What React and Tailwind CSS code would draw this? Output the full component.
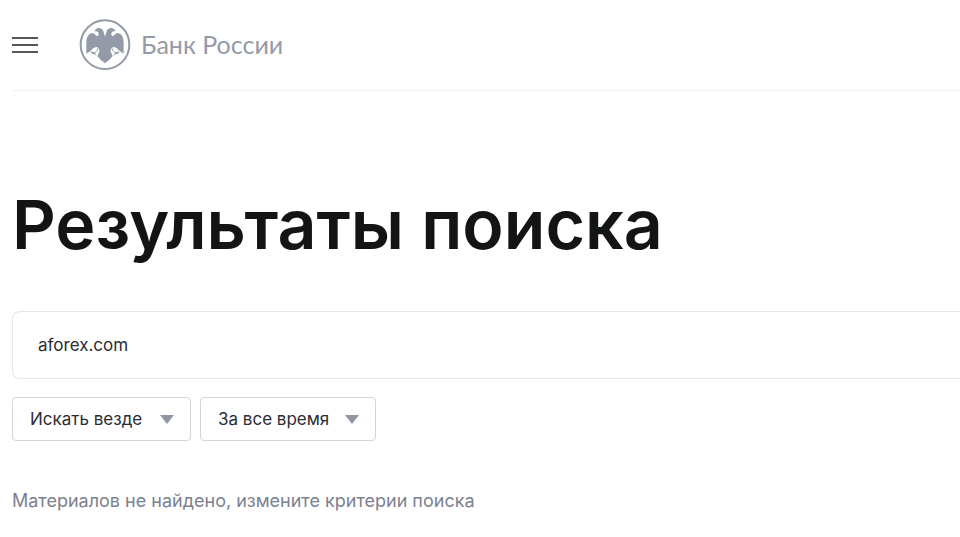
import { useState } from "react";

const EagleHalf = () => (
  <>
    <path d="M94 72 C92 66 91 60 89 55 C88 47 83 43 76 42 C69 41 64 45 61 52 L66 52 C71 52 74 55 74 60 C74 66 69 68 65 64 C61 58 55 57 49 59 C40 63 37 74 37 88 L37 119 L46 113 L52 109 L58 102 L67 99 L74 102 C77 107 77 113 73 119 L70 126 C73 130 77 132 79 137 C83 140 88 143 94 148 Z" />
    <path d="M72 104 C70 112 66 115 60 116 L51 114 M60 116 L65 123 M54 119 L62 118" fill="none" stroke="#949aa8" strokeWidth="3" strokeLinecap="round" />
  </>
);

const Logo = () => (
  <svg viewBox="15 15 156 156" className="h-13 w-13 shrink-0" fill="#949aa8" aria-hidden="true">
    <circle cx="93" cy="92" r="73" fill="none" stroke="#949aa8" strokeWidth="6" />
    <EagleHalf />
    <g transform="translate(186 0) scale(-1 1)">
      <EagleHalf />
    </g>
  </svg>
);

const Filter = ({ label, options, className }) => {
  const [value, setValue] = useState(options[0]);

  return (
    <div className={`relative ${className}`}>
      <select
        aria-label={label}
        value={value}
        onChange={(e) => setValue(e.target.value)}
        className="h-11 w-full appearance-none rounded border border-[#d4d5d9] bg-white pl-[17px] pr-10 pt-[2px] text-[17px] text-[#2b2d33]"
      >
        {options.map((option) => (
          <option key={option}>{option}</option>
        ))}
      </select>
      <svg viewBox="0 0 14 9" className="pointer-events-none absolute right-[17px] top-[18px] h-[9px] w-[14px]" fill="#9196a3">
        <path d="M0 0H14L7 9Z" />
      </svg>
    </div>
  );
};

const App = () => {
  const [query, setQuery] = useState("aforex.com");

  return (
    <div className="overflow-hidden bg-white pl-3 font-['Inter','Liberation_Sans',sans-serif]">
      <header className="flex h-[91px] items-center border-b border-[#f2f2f3]">
        <button type="button" aria-label="Меню" className="flex w-[26px] flex-col gap-[5px]">
          <span className="h-[2px] w-full bg-[#55565c]" />
          <span className="h-[2px] w-full bg-[#55565c]" />
          <span className="h-[2px] w-full bg-[#55565c]" />
        </button>
        <a href="#" className="ml-[41px] flex items-center gap-[10px]">
          <Logo />
          <span className="font-['Lato','Liberation_Sans',sans-serif] text-[25px] text-[#949aa8]">Банк России</span>
        </a>
      </header>

      <main>
        <h1 className="mt-[89px] whitespace-nowrap text-[68px] font-semibold leading-[88px] text-[#131416]">
          Результаты поиска
        </h1>

        <form className="mt-[43px]" onSubmit={(e) => e.preventDefault()}>
          <input
            type="text"
            aria-label="Поиск"
            value={query}
            onChange={(e) => setQuery(e.target.value)}
            className="h-17 w-full rounded-l-lg border border-r-0 border-[#e6e6e8] px-[25px] text-[17px] text-[#2b2d33]"
          />
          <div className="mt-[18px] flex gap-[9px]">
            <Filter label="Где искать" options={["Искать везде", "В новостях", "В документах"]} className="w-[179px]" />
            <Filter label="Период" options={["За все время", "За месяц", "За год"]} className="w-[176px]" />
          </div>
        </form>

        <p className="mt-12 pb-6 text-[18px] leading-6 text-[#7b818f]">Материалов не найдено, измените критерии поиска</p>
      </main>
    </div>
  );
};

export default App;
